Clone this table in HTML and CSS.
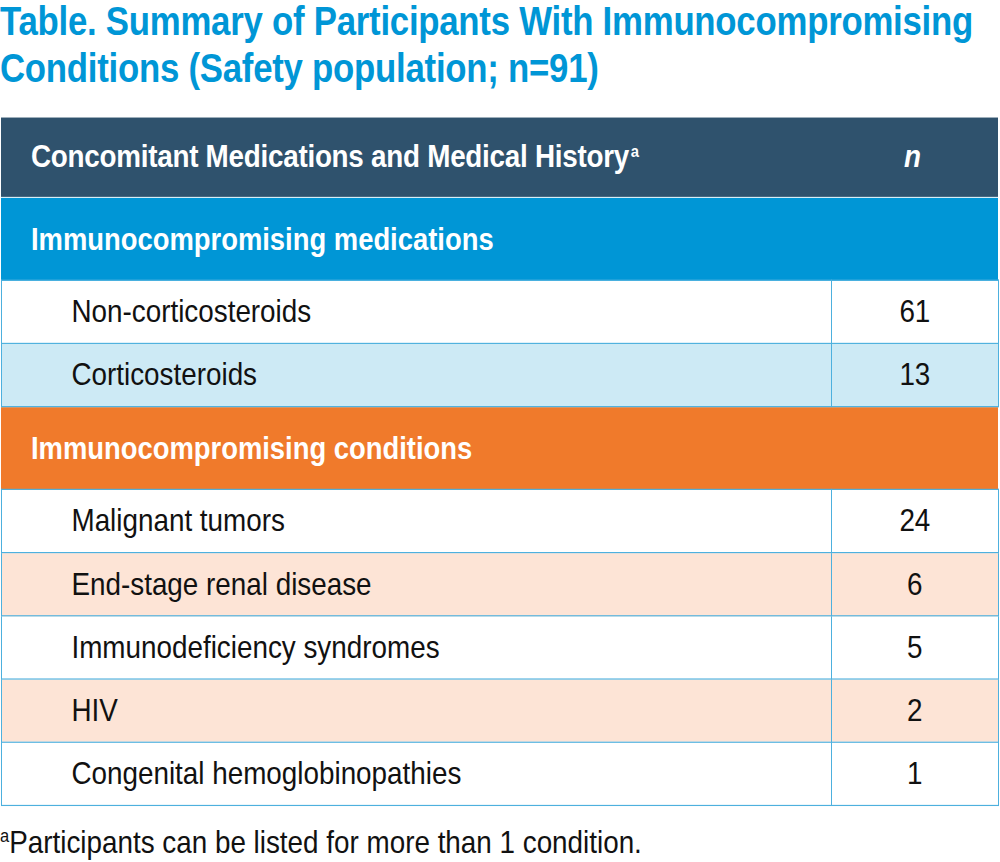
FILE: index.html
```html
<!DOCTYPE html>
<html lang="en">
<head>
<meta charset="utf-8">
<title>Summary of Participants</title>
<link rel="stylesheet" href="styles.css">
</head>
<body>
<div class="page">
  <h1 class="title">Table. Summary of Participants With Immunocompromising<br>Conditions (Safety population; n=91)</h1>
  <table class="summary">
    <thead>
      <tr class="head-row">
        <th class="col-label">Concomitant Medications and Medical History<sup>a</sup></th>
        <th class="col-n"><em>n</em></th>
      </tr>
    </thead>
    <tbody>
      <tr class="section section-blue"><td colspan="2">Immunocompromising medications</td></tr>
      <tr class="row"><td class="label">Non-corticosteroids</td><td class="num">61</td></tr>
      <tr class="row row-blue"><td class="label">Corticosteroids</td><td class="num">13</td></tr>
      <tr class="section section-orange"><td colspan="2">Immunocompromising conditions</td></tr>
      <tr class="row"><td class="label">Malignant tumors</td><td class="num">24</td></tr>
      <tr class="row row-peach"><td class="label">End-stage renal disease</td><td class="num">6</td></tr>
      <tr class="row"><td class="label">Immunodeficiency syndromes</td><td class="num">5</td></tr>
      <tr class="row row-peach"><td class="label">HIV</td><td class="num">2</td></tr>
      <tr class="row"><td class="label">Congenital hemoglobinopathies</td><td class="num">1</td></tr>
    </tbody>
  </table>
  <p class="footnote"><sup>a</sup>Participants can be listed for more than 1 condition.</p>
</div>
</body>
</html>
```

FILE: styles.css
```css
html {
  margin: 0;
  padding: 0;
  overflow: hidden;
  background: #ffffff;
}
body {
  margin: 0;
  padding: 0;
  height: 862px;
  background: #ffffff;
  font-family: "Liberation Sans", Arial, Helvetica, sans-serif;
  color: #111111;
}
/* Condensed look (Helvetica Condensed): Liberation Sans stretched vertically */
.page {
  width: 1000px;
  transform: scaleY(1.1494);
  transform-origin: 0 0;
}
.title {
  margin: -1.74px 0 21.75px 0;
  padding: 0;
  color: #0096d6;
  font-size: 34.8px;
  line-height: 40.89px;
  font-weight: bold;
  letter-spacing: -0.26px;
  white-space: nowrap;
}
.summary {
  width: 998px;
  margin-left: 0.87px;
  border-collapse: collapse;
  table-layout: fixed;
}
.summary th, .summary td {
  padding: 0;
}
.head-row {
  background: #2f526d;
}
.head-row th {
  color: #ffffff;
  font-size: 27.84px;
  font-weight: bold;
  letter-spacing: -0.26px;
  height: 69.6px;
  text-align: left;
  border-bottom: 1.74px solid #d6eef8;
}
.head-row sup {
  font-size: 14.8px;
  vertical-align: 9.6px;
  line-height: 0;
  margin-left: 1.74px;
}
.col-label {
  padding-left: 29.6px !important;
}
.col-n {
  width: 167px;
  text-align: center !important;
}
.col-n em {
  font-style: italic;
  padding-right: 5.2px;
}
.section td {
  color: #ffffff;
  font-size: 27.4px;
  font-weight: bold;
  padding-left: 29.6px;
  height: 71.34px;
}
.section-blue td {
  background: #0096d6;
}
.section-orange td {
  background: #f07a2b;
  height: 70.9px;
}
.row td {
  height: 53.94px;
  font-size: 27.84px;
  border: 1.3px solid #4db0de;
}
.row .label {
  padding-left: 69.6px;
}
.row .num {
  text-align: center;
}
.row-blue td {
  background: #cdeaf5;
}
.row-peach td {
  background: #fde4d6;
}
.footnote {
  margin: 14.8px 0 0 0;
  font-size: 27.84px;
  line-height: 34.8px;
}
.footnote sup {
  font-size: 16.5px;
  vertical-align: 9.6px;
  line-height: 0;
}
```
